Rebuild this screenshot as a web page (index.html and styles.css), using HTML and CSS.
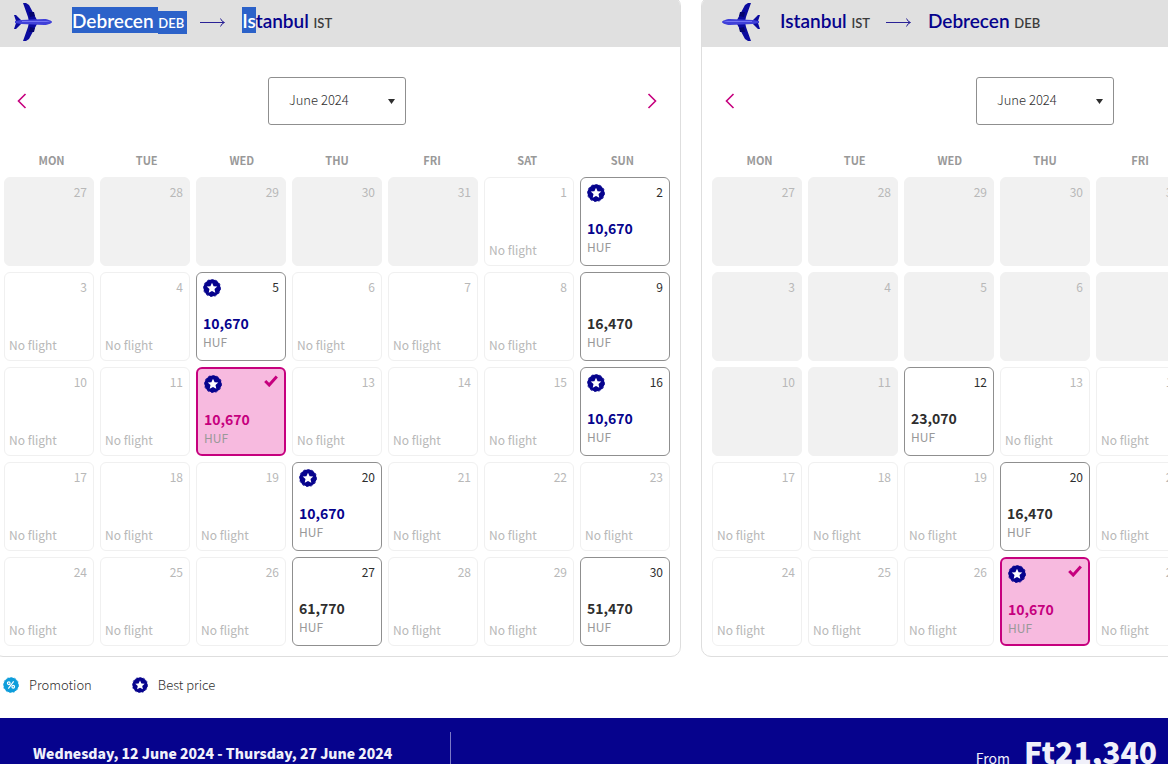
FILE: index.html
```html
<!DOCTYPE html>
<html lang="en">

<head>
  <meta charset="UTF-8" />
  <meta name="viewport" content="width=device-width, initial-scale=1.0" />
  <title>Select your flights</title>
  <link rel="stylesheet" href="styles.css">
</head>

<body>
  <!-- Shared icons -->
  <svg class="sprite" aria-hidden="true">
    <symbol id="plane" viewBox="0 0 38 38">
      <path fill="#0a0a9e" d="M9 0h3l3 2 8 15v4l-8 15-3 2H9l5-14 1-5-1-5z" />
      <path fill="#05056e" d="M15 9h5l1 4-5 1zM15 29h5l1-4-5-1z" />
      <path fill="#0a0a9e" d="M0 12h2l6 6v2l-6 6H0l2-6v-2z" />
      <path fill="#4040d8" d="M1 18l6-1 23-1c4 0 8 2 8 3s-4 3-8 3L7 21l-6-1z" />
      <path fill="#7474f4" d="M8 18h22c3 0 5 0 6 1H8z" />
    </symbol>
    <symbol id="arrow" viewBox="0 0 26 12">
      <path fill="none" stroke="#2a2296" d="M0 6.500h24M20.500 2.500q1 3 4 4q-3 1-4 4" />
    </symbol>
    <symbol id="chevron" viewBox="0 0 10 16">
      <path fill="none" stroke="#c6007e" stroke-width="1.600" d="M8.500 1L1.500 8l7 7" />
    </symbol>
    <symbol id="star" viewBox="0 0 18 18">
      <circle cx="9" cy="9" r="8.500" fill="#06038d" />
      <circle cx="9" cy="9" r="8.600" fill="none" stroke="#06038d" stroke-width=".8" stroke-dasharray="2.200 2.200" />
      <path fill="#fff" d="M9 3.800l1.600 3.400 3.700.4-2.800 2.500.8 3.700L9 12l-3.300 1.800.8-3.700-2.800-2.500 3.700-.4z" />
    </symbol>
    <symbol id="promo" viewBox="0 0 18 18">
      <circle cx="9" cy="9" r="8.500" fill="#0d9ddb" />
      <circle cx="9" cy="9" r="8.600" fill="none" stroke="#0d9ddb" stroke-width=".8" stroke-dasharray="2.200 2.200" />
      <g fill="none" stroke="#fff" stroke-width="1.300">
        <path d="M12 5l-6 8" />
        <circle cx="6.500" cy="7" r="1.500" />
        <circle cx="11.500" cy="11" r="1.500" />
      </g>
    </symbol>
    <symbol id="check" viewBox="0 0 14 12">
      <path fill="none" stroke="#c6007e" stroke-width="3" d="M1.200 6l4 4 7.600-8.500" />
    </symbol>
  </svg>

  <main class="calendars">
    <section class="panel">
      <header class="route">
        <svg class="plane"><use href="#plane" /></svg>
        <h2><mark>Debrecen </mark><small><mark>DEB</mark></small></h2>
        <svg class="arrow"><use href="#arrow" /></svg>
        <h2><mark>Is</mark>tanbul <small>IST</small></h2>
      </header>
      <div class="month-nav">
        <button class="nav-btn" aria-label="Previous month"><svg><use href="#chevron" /></svg></button>
        <select class="month" aria-label="Outbound month">
          <option>June 2024</option>
        </select>
        <button class="nav-btn next" aria-label="Next month"><svg><use href="#chevron" /></svg></button>
      </div>
      <div class="weekdays">
        <span>MON</span><span>TUE</span><span>WED</span><span>THU</span><span>FRI</span><span>SAT</span><span>SUN</span>
      </div>
      <div class="days">
        <div class="day past"><span class="date">27</span></div>
        <div class="day past"><span class="date">28</span></div>
        <div class="day past"><span class="date">29</span></div>
        <div class="day past"><span class="date">30</span></div>
        <div class="day past"><span class="date">31</span></div>
        <div class="day"><span class="date">1</span><span class="none">No flight</span></div>
        <button class="day fare best"><svg class="star"><use href="#star" /></svg><span class="date">2</span><strong>10,670</strong><span class="currency">HUF</span></button>

        <div class="day"><span class="date">3</span><span class="none">No flight</span></div>
        <div class="day"><span class="date">4</span><span class="none">No flight</span></div>
        <button class="day fare best"><svg class="star"><use href="#star" /></svg><span class="date">5</span><strong>10,670</strong><span class="currency">HUF</span></button>
        <div class="day"><span class="date">6</span><span class="none">No flight</span></div>
        <div class="day"><span class="date">7</span><span class="none">No flight</span></div>
        <div class="day"><span class="date">8</span><span class="none">No flight</span></div>
        <button class="day fare"><span class="date">9</span><strong>16,470</strong><span class="currency">HUF</span></button>

        <div class="day"><span class="date">10</span><span class="none">No flight</span></div>
        <div class="day"><span class="date">11</span><span class="none">No flight</span></div>
        <button class="day fare selected" aria-label="12 June, selected"><svg class="star"><use href="#star" /></svg><svg class="check"><use href="#check" /></svg><strong>10,670</strong><span class="currency">HUF</span></button>
        <div class="day"><span class="date">13</span><span class="none">No flight</span></div>
        <div class="day"><span class="date">14</span><span class="none">No flight</span></div>
        <div class="day"><span class="date">15</span><span class="none">No flight</span></div>
        <button class="day fare best"><svg class="star"><use href="#star" /></svg><span class="date">16</span><strong>10,670</strong><span class="currency">HUF</span></button>

        <div class="day"><span class="date">17</span><span class="none">No flight</span></div>
        <div class="day"><span class="date">18</span><span class="none">No flight</span></div>
        <div class="day"><span class="date">19</span><span class="none">No flight</span></div>
        <button class="day fare best"><svg class="star"><use href="#star" /></svg><span class="date">20</span><strong>10,670</strong><span class="currency">HUF</span></button>
        <div class="day"><span class="date">21</span><span class="none">No flight</span></div>
        <div class="day"><span class="date">22</span><span class="none">No flight</span></div>
        <div class="day"><span class="date">23</span><span class="none">No flight</span></div>

        <div class="day"><span class="date">24</span><span class="none">No flight</span></div>
        <div class="day"><span class="date">25</span><span class="none">No flight</span></div>
        <div class="day"><span class="date">26</span><span class="none">No flight</span></div>
        <button class="day fare"><span class="date">27</span><strong>61,770</strong><span class="currency">HUF</span></button>
        <div class="day"><span class="date">28</span><span class="none">No flight</span></div>
        <div class="day"><span class="date">29</span><span class="none">No flight</span></div>
        <button class="day fare"><span class="date">30</span><strong>51,470</strong><span class="currency">HUF</span></button>
      </div>
    </section>

    <section class="panel">
      <header class="route">
        <svg class="plane back"><use href="#plane" /></svg>
        <h2>Istanbul <small>IST</small></h2>
        <svg class="arrow"><use href="#arrow" /></svg>
        <h2>Debrecen <small>DEB</small></h2>
      </header>
      <div class="month-nav">
        <button class="nav-btn" aria-label="Previous month"><svg><use href="#chevron" /></svg></button>
        <select class="month" aria-label="Return month">
          <option>June 2024</option>
        </select>
        <button class="nav-btn next" aria-label="Next month"><svg><use href="#chevron" /></svg></button>
      </div>
      <div class="weekdays">
        <span>MON</span><span>TUE</span><span>WED</span><span>THU</span><span>FRI</span>
      </div>
      <!-- the weekend columns stay empty -->
      <div class="days weekdays-only">
        <div class="day past"><span class="date">27</span></div>
        <div class="day past"><span class="date">28</span></div>
        <div class="day past"><span class="date">29</span></div>
        <div class="day past"><span class="date">30</span></div>
        <div class="day past"><span class="date">31</span></div>

        <div class="day past"><span class="date">3</span></div>
        <div class="day past"><span class="date">4</span></div>
        <div class="day past"><span class="date">5</span></div>
        <div class="day past"><span class="date">6</span></div>
        <div class="day past"><span class="date">7</span></div>

        <div class="day past"><span class="date">10</span></div>
        <div class="day past"><span class="date">11</span></div>
        <button class="day fare"><span class="date">12</span><strong>23,070</strong><span class="currency">HUF</span></button>
        <div class="day"><span class="date">13</span><span class="none">No flight</span></div>
        <div class="day"><span class="date">14</span><span class="none">No flight</span></div>

        <div class="day"><span class="date">17</span><span class="none">No flight</span></div>
        <div class="day"><span class="date">18</span><span class="none">No flight</span></div>
        <div class="day"><span class="date">19</span><span class="none">No flight</span></div>
        <button class="day fare"><span class="date">20</span><strong>16,470</strong><span class="currency">HUF</span></button>
        <div class="day"><span class="date">21</span><span class="none">No flight</span></div>

        <div class="day"><span class="date">24</span><span class="none">No flight</span></div>
        <div class="day"><span class="date">25</span><span class="none">No flight</span></div>
        <div class="day"><span class="date">26</span><span class="none">No flight</span></div>
        <button class="day fare selected" aria-label="27 June, selected"><svg class="star"><use href="#star" /></svg><svg class="check"><use href="#check" /></svg><strong>10,670</strong><span class="currency">HUF</span></button>
        <div class="day"><span class="date">28</span><span class="none">No flight</span></div>
      </div>
    </section>
  </main>

  <div class="legend">
    <span><svg><use href="#promo" /></svg>Promotion</span>
    <span><svg><use href="#star" /></svg>Best price</span>
  </div>

  <footer class="summary">
    <p class="dates">Wednesday, 12 June 2024 - Thursday, 27 June 2024</p>
    <p class="total">From <strong>Ft21,340</strong></p>
  </footer>
</body>

</html>
```
FILE: styles.css
```css
* {
  margin: 0;
  padding: 0;
  box-sizing: border-box;
}

body {
  font-family: "Noto Sans CJK SC", "Open Sans", sans-serif;
  font-size: 13px;
  line-height: 18px;
  color: #2e2e2e;
  background: #fff;
  overflow: hidden;
}

button,
select {
  font: inherit;
  color: inherit;
}

.sprite {
  display: none;
}

/* Calendars */
.calendars {
  display: grid;
  grid-template-columns: 1fr 1fr;
  gap: 20px;
  width: calc(100% + 228px);
  margin: -4px 0 0 -7px;
}

.panel {
  border: 1px solid #dedede;
  border-radius: 10px;
  overflow: hidden;
}

.route {
  display: flex;
  align-items: center;
  height: 50px;
  padding: 0 20px;
  background: #e0e0e0;
}

.plane {
  width: 38px;
  height: 38px;
  margin-right: 20px;
}

.plane.back {
  transform: scaleX(-1);
}

.route h2 {
  font-family: Lato, sans-serif;
  font-size: 19px;
  font-weight: 600;
  line-height: 24px;
  color: #06038d;
}

.route small {
  font-size: 13px;
  color: #3c3c3c;
}

.route mark {
  padding: 2px 0 1px;
  color: #fff;
  background: #2c62c9;
}

.route small mark {
  margin-right: -3px;
  padding: 4px 3px 3px 0;
}

.arrow {
  width: 26px;
  height: 12px;
  margin: 0 16px;
}

.month-nav {
  display: flex;
  justify-content: space-between;
  align-items: center;
  padding: 30px 16px 0;
}

.nav-btn {
  width: 24px;
  height: 24px;
  border: none;
  background: none;
  cursor: pointer;
}

.nav-btn svg {
  display: block;
  width: 10px;
  height: 16px;
  margin: 0 auto;
}

.nav-btn.next svg {
  transform: scaleX(-1);
}

.month {
  appearance: none;
  width: 138px;
  height: 48px;
  padding: 0 20px 2px;
  border: 1px solid #8f8f8f;
  border-radius: 3px;
  font-weight: 300;
  background: url("data:image/svg+xml,%3Csvg xmlns='http://www.w3.org/2000/svg' width='7' height='5'%3E%3Cpath d='M0 0h7L3.500 5z' fill='%232e2e2e'/%3E%3C/svg%3E") no-repeat right 10px center;
  cursor: pointer;
}

.weekdays {
  display: grid;
  grid-template-columns: repeat(7, 1fr);
  padding: 26px 10px 8px;
  font-size: 11px;
  font-weight: 700;
  text-align: center;
  color: #999;
}

.days {
  display: grid;
  grid-template-columns: repeat(7, 1fr);
  gap: 6px;
  padding: 0 10px 10px;
}

.weekdays-only .day:nth-child(5n + 1) {
  grid-column: 1;
}

.day {
  display: grid;
  grid-template-columns: 1fr auto;
  grid-template-rows: 18px 1fr auto;
  height: 89px;
  padding: 6px 6px 6px 4px;
  border: 1px solid #f0f0f0;
  border-radius: 6px;
  text-align: left;
  color: #b8b8b8;
  background: #fff;
}

.day.past {
  border-color: #f1f1f1;
  background: #f1f1f1;
}

.date {
  grid-column: 2;
  grid-row: 1;
  font-size: 12px;
  line-height: 16px;
}

.none {
  grid-column: 1 / -1;
  grid-row: 3;
  font-size: 12px;
}

.day.fare {
  grid-template-rows: 18px 35px 20px;
  align-content: start;
  padding-left: 6px;
  border-color: #8f8f8f;
  color: #2e2e2e;
  cursor: pointer;
}

.fare strong {
  grid-column: 1;
  grid-row: 2;
  align-self: end;
  font-size: 14px;
  font-weight: 700;
}

.currency {
  grid-column: 1;
  grid-row: 3;
  font-size: 12px;
  line-height: 20px;
  color: #999;
}

.star {
  width: 18px;
  height: 18px;
}

.day.best strong {
  color: #06038d;
}

.day.selected {
  border: 2px solid #c6007e;
  background: #f7badf;
}

.selected strong {
  color: #c6007e;
}

.check {
  grid-column: 2;
  grid-row: 1;
  width: 14px;
  height: 12px;
}

/* Legend */
.legend {
  display: flex;
  gap: 40px;
  padding: 19px 3px 24px;
  font-weight: 300;
}

.legend span {
  display: flex;
  align-items: center;
}

.legend svg {
  width: 16px;
  height: 16px;
  margin-right: 10px;
}

/* Bottom bar */
.summary {
  display: flex;
  justify-content: space-between;
  height: 46px;
  padding: 14px 11px 0 33px;
  overflow: hidden;
  color: #f0f0fa;
  background: #06038d;
}

.dates {
  width: 418px;
  padding-top: 11px;
  border-right: 1px solid #7b79c6;
  font-size: 14px;
  font-weight: 900;
  line-height: 20px;
}

.total {
  display: flex;
  align-items: baseline;
  gap: 14px;
  font-size: 14px;
}

.total strong {
  font-size: 30px;
  font-weight: 900;
  line-height: 38px;
}
```
